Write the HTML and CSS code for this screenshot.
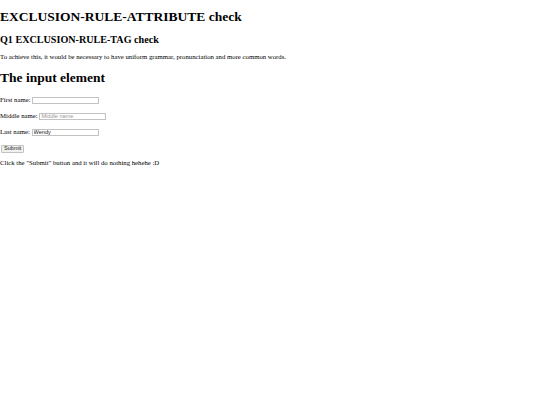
FILE: index.html
```html
<!DOCTYPE html>
<html>
<head>
<meta charset="utf-8">
<link rel="stylesheet" href="styles.css">
</head>
<body class="page">
<h1 class="title">EXCLUSION-RULE-ATTRIBUTE check</h1>
<h2 class="sub">Q1 EXCLUSION-RULE-TAG check</h2>
<p class="text">To achieve this, it would be necessary to have uniform grammar, pronunciation and more common words.</p>
<h1 class="title">The input element</h1>
<form class="form">
<p class="text row"><label for="fname">First name:</label> <input class="field" type="text" id="fname"></p>
<p class="text row"><label for="mname">Middle name:</label> <input class="field" type="text" id="mname" placeholder="Middle name"></p>
<p class="text row"><label for="lname">Last name:</label> <input class="field" type="text" id="lname" value="Wendy"></p>
<input class="btn" type="submit" value="Submit">
</form>
<p class="text">Click the "Submit" button and it will do nothing hehehe :D</p>
</body>
</html>
```
FILE: styles.css
```css
html { background: #fff; }
.page {
  margin: 0;
  font-family: "Liberation Serif", "Times New Roman", serif;
  font-size: 6.75px;
  color: #000;
}
.title {
  font-size: 13.5px;
  font-weight: bold;
  margin: 9.05px 0;
}
.sub {
  font-size: 10.125px;
  font-weight: bold;
  margin: 8.4px 0;
}
.text {
  margin: 6.75px 0;
}
.row {
  line-height: 9.3px;
}
.form { margin: 0; }
.field {
  box-sizing: border-box;
  width: 67px;
  height: 7px;
  padding: 0 1px;
  border: 1px solid #c2c2c2;
  border-radius: 0.5px;
  font-family: "Liberation Sans", Arial, sans-serif;
  font-size: 5.6px;
  line-height: 1;
  color: #222;
  vertical-align: middle;
  margin: 0;
  outline: none;
}
.field::placeholder { color: #9a9a9a; }
.btn {
  box-sizing: border-box;
  height: 8px;
  padding: 0 2px;
  margin: 2px 0 0 1px;
  border: 1px solid #c2c2c2;
  border-radius: 1px;
  background: #f0f0f0;
  font-family: "Liberation Sans", Arial, sans-serif;
  font-size: 5.6px;
  color: #222;
  line-height: 1;
  vertical-align: middle;
}
```
